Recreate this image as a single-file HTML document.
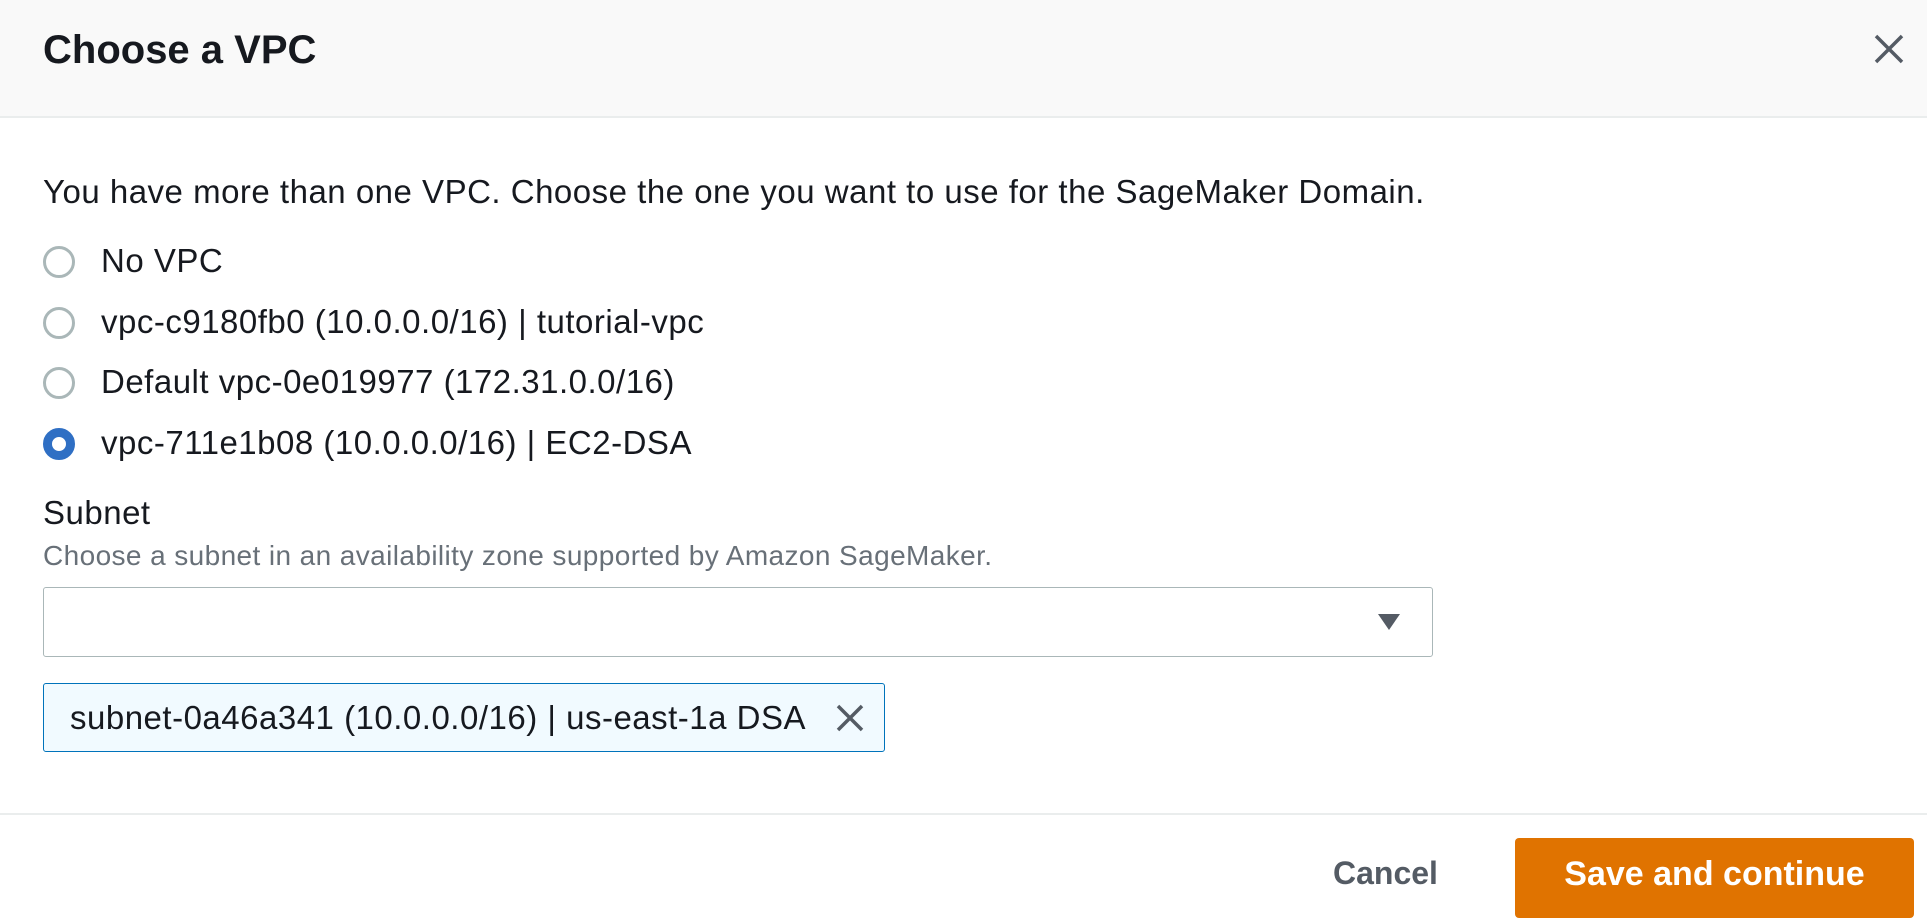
<!DOCTYPE html>
<html><head><style>
*{margin:0;padding:0;box-sizing:border-box}
body{width:1927px;height:905px;overflow:hidden;background:#fff;font-family:"Liberation Sans",sans-serif;color:#16191f;position:relative}
.hdr{position:absolute;left:0;top:0;width:1927px;height:118px;background:#f9f9f9;border-bottom:2px solid #eaeded}
.title{position:absolute;left:43px;top:28px;font-size:40px;font-weight:bold}
.abs{position:absolute;white-space:nowrap}
.t{font-size:33px;letter-spacing:0.5px}
.radio{position:absolute;left:43px;width:32px;height:32px;border-radius:50%;border:3px solid #aab7b8;background:#fff}
.radio.on{border:9px solid #2f6fc4}
.sel{position:absolute;left:43px;top:587px;width:1390px;height:70px;border:1.5px solid #aab7b8;border-radius:3px}
.tok{position:absolute;left:43px;top:683px;width:842px;height:69px;border:1.5px solid #0073bb;background:#f1faff;border-radius:3px}
.foot{position:absolute;left:0;top:813px;width:1927px;height:2px;background:#eaeded}
.btn{position:absolute;left:1515px;top:838px;width:399px;height:80px;background:#e07300;border-radius:4px;color:#fff;font-weight:bold;font-size:34px;text-align:center;line-height:72px}
</style></head><body>
<div class="hdr"><div class="title">Choose a VPC</div>
<svg class="abs" style="left:1873px;top:33px" width="32" height="32" viewBox="0 0 32 32"><path d="M3 3L29 29M29 3L3 29" stroke="#545b64" stroke-width="3.5"/></svg></div>
<div class="abs t" style="left:43px;top:173px">You have more than one VPC. Choose the one you want to use for the SageMaker Domain.</div>
<div class="radio" style="top:246px"></div><div class="abs t" style="left:101px;top:242px">No VPC</div>
<div class="radio" style="top:307px"></div><div class="abs t" style="left:101px;top:303px">vpc-c9180fb0 (10.0.0.0/16) | tutorial-vpc</div>
<div class="radio" style="top:367px"></div><div class="abs t" style="left:101px;top:363px">Default vpc-0e019977 (172.31.0.0/16)</div>
<div class="radio on" style="top:428px"></div><div class="abs t" style="left:101px;top:424px">vpc-711e1b08 (10.0.0.0/16) | EC2-DSA</div>
<div class="abs t" style="left:43px;top:494px">Subnet</div>
<div class="abs" style="left:43px;top:540px;font-size:28px;letter-spacing:0.4px;color:#687078">Choose a subnet in an availability zone supported by Amazon SageMaker.</div>
<div class="sel"></div>
<svg class="abs" style="left:1377px;top:613px" width="24" height="18" viewBox="0 0 24 18"><path d="M1 1H23L12 17Z" fill="#545b64"/></svg>
<div class="tok"></div>
<div class="abs" style="left:70px;top:699px;font-size:33px;letter-spacing:0.5px">subnet-0a46a341 (10.0.0.0/16) | us-east-1a DSA</div>
<svg class="abs" style="left:835px;top:703px" width="30" height="30" viewBox="0 0 30 30"><path d="M3 3L27 27M27 3L3 27" stroke="#545b64" stroke-width="3.5"/></svg>
<div class="foot"></div>
<div class="abs" style="left:1333px;top:855px;font-size:32px;font-weight:bold;color:#545b64">Cancel</div>
<div class="btn">Save and continue</div>
</body></html>
